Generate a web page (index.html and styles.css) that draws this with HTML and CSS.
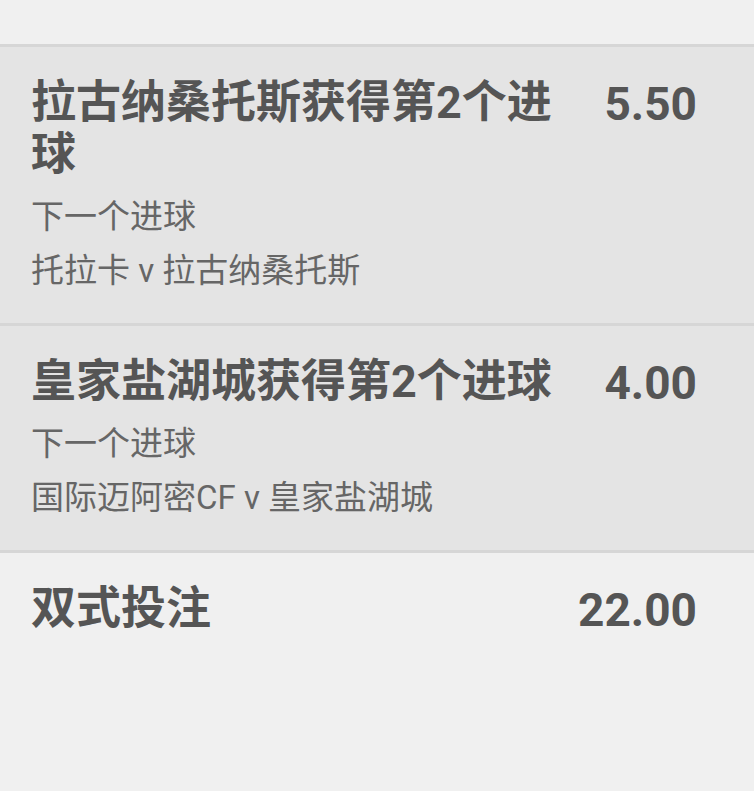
FILE: index.html
```html
<!DOCTYPE html>
<html lang="zh-CN">
<head>
    <meta charset="UTF-8">
    <meta name="viewport" content="width=device-width, initial-scale=1.0">
    <title>投注单</title>
    <link rel="stylesheet" href="styles.css">
</head>
<body>
    <div class="slip">
        <div class="slip-top"></div>

        <div class="selection">
            <div class="selection-info">
                <div class="selection-title">拉古纳桑托斯获得第2个进球</div>
                <div class="selection-market">下一个进球</div>
                <div class="selection-event">托拉卡 v 拉古纳桑托斯</div>
            </div>
            <div class="selection-odds">5.50</div>
        </div>

        <div class="selection">
            <div class="selection-info">
                <div class="selection-title">皇家盐湖城获得第2个进球</div>
                <div class="selection-market">下一个进球</div>
                <div class="selection-event">国际迈阿密CF v 皇家盐湖城</div>
            </div>
            <div class="selection-odds">4.00</div>
        </div>

        <div class="bet-type">
            <div class="bet-type-name">双式投注</div>
            <div class="selection-odds">22.00</div>
        </div>
    </div>
</body>
</html>
```

FILE: styles.css
```css
body {
    margin: 0;
    background-color: #f0f0f0;
    font-family: Roboto, "Noto Sans CJK SC", sans-serif;
    color: #555555;
}
.slip {
    display: flex;
    flex-direction: column;
}
.slip-top {
    height: 44px;
    border-bottom: 3px solid #d6d6d6;
}
.selection {
    display: flex;
    justify-content: space-between;
    align-items: flex-start;
    gap: 32px;
    background-color: #e4e4e4;
    padding: 30px 57px 25px 31px;
    border-bottom: 3px solid #d6d6d6;
}
.selection-info {
    flex: 1;
}
.selection-title {
    font-size: 45px;
    line-height: 52px;
    font-weight: bold;
}
.selection-market,
.selection-event {
    font-size: 33px;
    line-height: 54px;
    color: #666666;
}
.selection-market {
    margin-top: 9px;
}
.selection-odds {
    font-size: 46px;
    line-height: 54px;
    font-weight: bold;
    white-space: nowrap;
}
.bet-type {
    display: flex;
    justify-content: space-between;
    align-items: flex-start;
    padding: 30px 57px 30px 31px;
}
.bet-type-name {
    font-size: 45px;
    line-height: 52px;
    font-weight: bold;
}
```
